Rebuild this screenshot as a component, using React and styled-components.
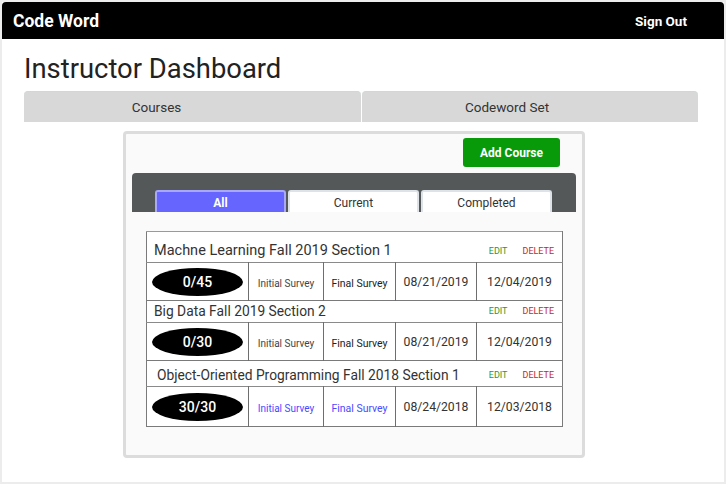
import React from 'react'
import styled, { createGlobalStyle } from 'styled-components'

const GlobalStyle = createGlobalStyle`
  html, body {
    margin: 0;
    padding: 0;
    background: #ffffff;
    font-family: Roboto, "Liberation Sans", sans-serif;
  }
  * {
    box-sizing: border-box;
  }
`

const courses = [
  {
    title: 'Machne Learning Fall 2019 Section 1',
    count: '0/45',
    start: '08/21/2019',
    end: '12/04/2019',
    titleHeight: 31,
    rowHeight: 38,
    indent: 0,
    size: 14.5,
    linked: false,
  },
  {
    title: 'Big Data Fall 2019 Section 2',
    count: '0/30',
    start: '08/21/2019',
    end: '12/04/2019',
    titleHeight: 22,
    rowHeight: 38,
    indent: 0,
    size: 13.8,
    linked: false,
  },
  {
    title: 'Object-Oriented Programming Fall 2018 Section 1',
    count: '30/30',
    start: '08/24/2018',
    end: '12/03/2018',
    titleHeight: 26,
    rowHeight: 40,
    indent: 3,
    size: 13.8,
    linked: true,
  },
]

const App = () => {
  return (
    <Frame>
      <GlobalStyle />
      <Header>
        <Brand>Code Word</Brand>
        <SignOut>Sign Out</SignOut>
      </Header>
      <Content>
        <PageTitle>Instructor Dashboard</PageTitle>
        <MainTabs>
          <MainTab $shift={72}>Courses</MainTab>
          <MainTab $shift={46}>Codeword Set</MainTab>
        </MainTabs>
        <Card>
          <CardTop>
            <AddButton>Add Course</AddButton>
          </CardTop>
          <FilterBand>
            <FilterTab $active>All</FilterTab>
            <FilterTab>Current</FilterTab>
            <FilterTab>Completed</FilterTab>
          </FilterBand>
          <Table>
            <colgroup>
              <col style={{ width: 102 }} />
              <col style={{ width: 75 }} />
              <col style={{ width: 72 }} />
              <col style={{ width: 81 }} />
              <col style={{ width: 86 }} />
            </colgroup>
            <tbody>
              {courses.map((c) => (
                <React.Fragment key={c.title}>
                  <TitleRow style={{ height: c.titleHeight }}>
                    <td colSpan={5}>
                      <TitleLine>
                        <CourseName $indent={c.indent} $size={c.size}>
                          {c.title}
                        </CourseName>
                        <Actions>
                          <Edit>EDIT</Edit>
                          <Delete>DELETE</Delete>
                        </Actions>
                      </TitleLine>
                    </td>
                  </TitleRow>
                  <DetailRow style={{ height: c.rowHeight }}>
                    <Cell>
                      <Pill>{c.count}</Pill>
                    </Cell>
                    <Cell>
                      <Survey $linked={c.linked} $muted>Initial Survey</Survey>
                    </Cell>
                    <Cell>
                      <Survey $linked={c.linked}>Final Survey</Survey>
                    </Cell>
                    <DateCell>{c.start}</DateCell>
                    <DateCell>{c.end}</DateCell>
                  </DetailRow>
                </React.Fragment>
              ))}
            </tbody>
          </Table>
        </Card>
      </Content>
    </Frame>
  )
}

export default App

const Frame = styled.div`
  width: 726px;
  height: 484px;
  border: 2px solid #ececec;
  background: #ffffff;
  overflow: hidden;
`
const Header = styled.div`
  height: 37px;
  background: #000000;
  border-radius: 4px 4px 0 0;
  display: flex;
  align-items: center;
  justify-content: space-between;
  padding: 0 37px 0 11px;
  color: #ffffff;
`
const Brand = styled.div`
  font-size: 17.5px;
  font-weight: 700;
`
const SignOut = styled.div`
  font-size: 13.5px;
  font-weight: 700;
`
const Content = styled.div`
  padding: 0 26px 0 22px;
`
const PageTitle = styled.h1`
  margin: 0;
  padding-top: 14px;
  height: 52px;
  font-size: 27.4px;
  line-height: 32px;
  font-weight: 400;
  color: #222222;
`
const MainTabs = styled.div`
  display: grid;
  grid-template-columns: 337px 336px;
  gap: 1px;
`
const MainTab = styled.div`
  height: 31px;
  background: #d8d8d8;
  border-top: 1px solid #cfd6dc;
  border-radius: 4px 4px 0 0;
  display: flex;
  align-items: center;
  justify-content: center;
  padding-right: ${(p) => p.$shift}px;
  font-size: 13.5px;
  color: #333333;
`
const Card = styled.div`
  width: 462px;
  height: 327px;
  margin: 9px 0 0 99px;
  background: #fafafa;
  border: 3px solid #dcdcdc;
  border-radius: 4px;
  padding: 4px 6px 0;
`
const CardTop = styled.div`
  display: flex;
  justify-content: flex-end;
  padding-right: 16px;
  height: 35px;
`
const AddButton = styled.div`
  width: 97px;
  height: 29px;
  background: #089a08;
  border-radius: 3px;
  display: flex;
  align-items: center;
  justify-content: center;
  color: #ffffff;
  font-size: 12px;
  font-weight: 700;
`
const FilterBand = styled.div`
  height: 39px;
  background: #555859;
  border-radius: 4px 4px 0 0;
  display: flex;
  align-items: flex-end;
  gap: 2px;
  padding-left: 23px;
`
const FilterTab = styled.div`
  width: 131px;
  height: 22px;
  background: ${(p) => (p.$active ? '#6666ff' : '#ffffff')};
  border: 2px solid ${(p) => (p.$active ? '#a8a8ff' : '#dde3e8')};
  border-bottom: none;
  border-radius: 3px 3px 0 0;
  display: flex;
  align-items: center;
  justify-content: center;
  padding-top: 2px;
  font-size: 12px;
  font-weight: ${(p) => (p.$active ? 700 : 400)};
  color: ${(p) => (p.$active ? '#ffffff' : '#333333')};
`
const Table = styled.table`
  width: 416px;
  margin: 19px 0 0 14px;
  border-collapse: collapse;
  table-layout: fixed;
  background: #ffffff;
  border: 1px solid #7a7a7a;
  border-top-color: #9a9a9a;
  td {
    padding: 0;
  }
`
const TitleRow = styled.tr`
  border-bottom: 1px solid #8a8a8a;
  td {
    vertical-align: bottom;
  }
`
const TitleLine = styled.div`
  display: flex;
  align-items: flex-end;
  justify-content: space-between;
  padding: 0 8px 3px 7px;
`
const CourseName = styled.span`
  font-size: ${(p) => p.$size}px;
  color: #333333;
  padding-left: ${(p) => p.$indent}px;
`
const Actions = styled.span`
  display: flex;
  gap: 15px;
  font-size: 9px;
  padding-bottom: 3px;
`
const Edit = styled.span`
  color: #2a9a2a;
`
const Delete = styled.span`
  color: #c62828;
`
const DetailRow = styled.tr`
  border-bottom: 1px solid #7a7a7a;
`
const Cell = styled.td`
  border-right: 1px solid #6e6e6e;
  text-align: center;
  vertical-align: middle;
  &:last-child {
    border-right: none;
  }
`
const DateCell = styled(Cell)`
  font-size: 12.2px;
  color: #333333;
`
const Pill = styled.div`
  width: 91px;
  height: 28px;
  margin: 0 auto;
  background: #000000;
  border-radius: 50%;
  display: flex;
  align-items: center;
  justify-content: center;
  color: #ffffff;
  font-size: 14px;
  font-weight: 500;
`
const Survey = styled.span`
  font-size: ${(p) => (p.$muted ? '10px' : '10.5px')};
  color: ${(p) => (p.$linked ? '#4a4aff' : p.$muted ? '#444444' : '#222222')};
`
